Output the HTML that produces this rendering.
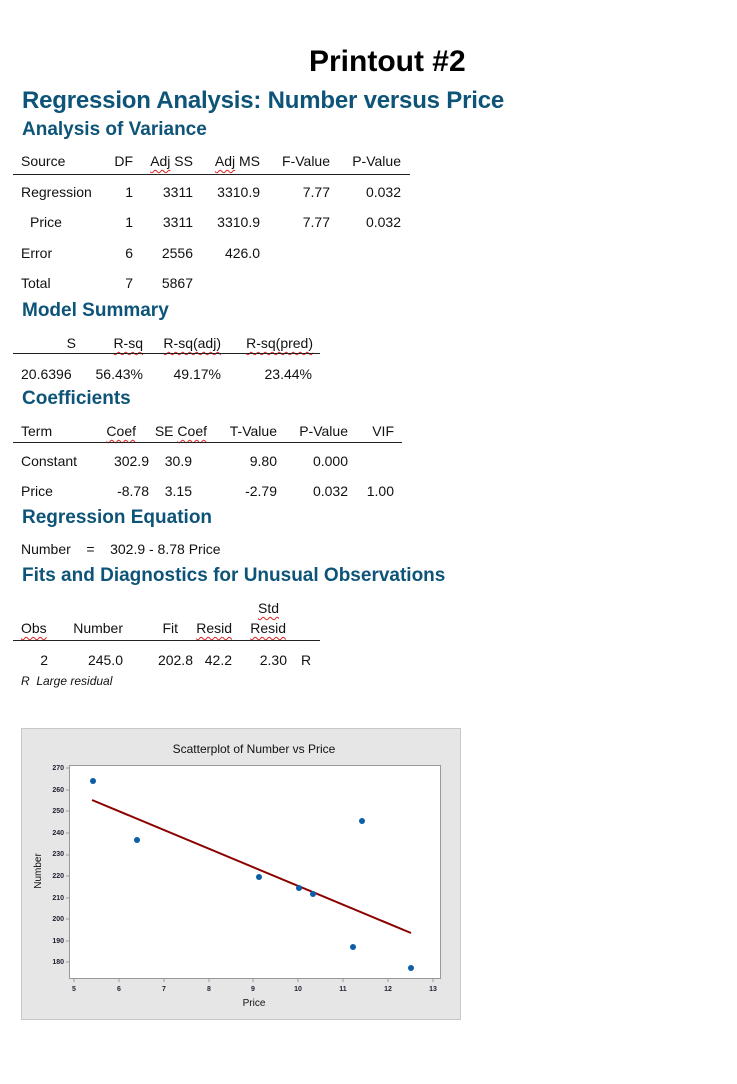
<!DOCTYPE html>
<html><head><meta charset="utf-8"><style>
body{margin:0;width:737px;height:1084px;background:#fff;position:relative;font-family:"Liberation Sans",sans-serif;overflow:hidden}
.t{position:absolute;font-size:14px;line-height:18px;color:#111;white-space:pre}
.h{position:absolute;color:#0d5478;font-weight:bold;white-space:pre;font-size:19px;line-height:22px}
.ln{position:absolute;height:1px;background:#222}
.w{text-decoration:underline wavy #d22;text-decoration-thickness:1px;text-underline-offset:3px}
</style></head><body>
<div style="position:absolute;left:309px;top:44px;font-size:30px;font-weight:bold;line-height:36px">Printout #2</div>
<div class="h" style="left:22px;top:87px;font-size:24px;line-height:28px;letter-spacing:-0.2px">Regression Analysis: Number versus Price</div>
<div class="h" style="left:22px;top:119px">Analysis of Variance</div>

<div class="t" style="left:21px;top:152px">Source</div>
<div class="t" style="right:604px;top:152px">DF</div>
<div class="t" style="right:544px;top:152px"><span class="w">Adj</span> SS</div>
<div class="t" style="right:477px;top:152px"><span class="w">Adj</span> MS</div>
<div class="t" style="right:407px;top:152px">F-Value</div>
<div class="t" style="right:336px;top:152px">P-Value</div>
<div class="ln" style="left:13px;width:397px;top:174px"></div>
<div class="t" style="left:21px;top:183px">Regression</div>
<div class="t" style="right:604px;top:183px">1</div><div class="t" style="right:544px;top:183px">3311</div><div class="t" style="right:477px;top:183px">3310.9</div><div class="t" style="right:407px;top:183px">7.77</div><div class="t" style="right:336px;top:183px">0.032</div>
<div class="t" style="left:30px;top:213px">Price</div>
<div class="t" style="right:604px;top:213px">1</div><div class="t" style="right:544px;top:213px">3311</div><div class="t" style="right:477px;top:213px">3310.9</div><div class="t" style="right:407px;top:213px">7.77</div><div class="t" style="right:336px;top:213px">0.032</div>
<div class="t" style="left:21px;top:244px">Error</div>
<div class="t" style="right:604px;top:244px">6</div><div class="t" style="right:544px;top:244px">2556</div><div class="t" style="right:477px;top:244px">426.0</div>
<div class="t" style="left:21px;top:274px">Total</div>
<div class="t" style="right:604px;top:274px">7</div><div class="t" style="right:544px;top:274px">5867</div>

<div class="h" style="left:22px;top:300px">Model Summary</div>
<div class="t" style="right:661px;top:334px">S</div>
<div class="t" style="right:594px;top:334px"><span class="w">R-sq</span></div>
<div class="t" style="right:516px;top:334px"><span class="w">R-sq(adj)</span></div>
<div class="t" style="right:424px;top:334px"><span class="w">R-sq(pred)</span></div>
<div class="ln" style="left:13px;width:307px;top:353px"></div>
<div class="t" style="left:21px;top:365px">20.6396</div>
<div class="t" style="right:594px;top:365px">56.43%</div>
<div class="t" style="right:516px;top:365px">49.17%</div>
<div class="t" style="right:425px;top:365px">23.44%</div>

<div class="h" style="left:22px;top:388px">Coefficients</div>
<div class="t" style="left:21px;top:422px">Term</div>
<div class="t" style="right:601px;top:422px"><span class="w">Coef</span></div>
<div class="t" style="right:530px;top:422px">SE <span class="w">Coef</span></div>
<div class="t" style="right:460px;top:422px">T-Value</div>
<div class="t" style="right:389px;top:422px">P-Value</div>
<div class="t" style="right:343px;top:422px">VIF</div>
<div class="ln" style="left:13px;width:389px;top:442px"></div>
<div class="t" style="left:21px;top:452px">Constant</div>
<div class="t" style="right:588px;top:452px">302.9</div><div class="t" style="right:545px;top:452px">30.9</div><div class="t" style="right:460px;top:452px">9.80</div><div class="t" style="right:389px;top:452px">0.000</div>
<div class="t" style="left:21px;top:482px">Price</div>
<div class="t" style="right:588px;top:482px">-8.78</div><div class="t" style="right:545px;top:482px">3.15</div><div class="t" style="right:460px;top:482px">-2.79</div><div class="t" style="right:389px;top:482px">0.032</div><div class="t" style="right:343px;top:482px">1.00</div>

<div class="h" style="left:22px;top:507px">Regression Equation</div>
<div class="t" style="left:21px;top:540px">Number    =    302.9 - 8.78 Price</div>

<div class="h" style="left:22px;top:565px">Fits and Diagnostics for Unusual Observations</div>
<div class="t" style="left:258px;top:599px"><span class="w">Std</span></div>
<div class="t" style="left:21px;top:619px"><span class="w">Obs</span></div>
<div class="t" style="right:614px;top:619px">Number</div>
<div class="t" style="right:559px;top:619px">Fit</div>
<div class="t" style="right:505px;top:619px"><span class="w">Resid</span></div>
<div class="t" style="right:451px;top:619px"><span class="w">Resid</span></div>
<div class="ln" style="left:13px;width:307px;top:640px"></div>
<div class="t" style="right:689px;top:651px">2</div>
<div class="t" style="right:614px;top:651px">245.0</div>
<div class="t" style="right:544px;top:651px">202.8</div>
<div class="t" style="right:505px;top:651px">42.2</div>
<div class="t" style="right:450px;top:651px">2.30</div>
<div class="t" style="left:301px;top:651px">R</div>
<div class="t" style="left:21px;top:672px;font-size:12px;font-style:italic">R  Large residual</div>

<svg style="position:absolute;left:21px;top:728px" width="440" height="293" viewBox="21 728 440 293" font-family="Liberation Sans, sans-serif">
<rect x="21.5" y="728.5" width="439" height="291" fill="#e6e6e6" stroke="#c8c8c8"/>
<rect x="69.5" y="765.5" width="371" height="213" fill="#fff" stroke="#999"/>
<text x="254" y="753" font-size="12" text-anchor="middle" fill="#111">Scatterplot of Number vs Price</text>
<g font-size="7" fill="#223" text-anchor="end" font-weight="bold">
<text x="64" y="770">270</text><text x="64" y="792">260</text><text x="64" y="813">250</text><text x="64" y="835">240</text><text x="64" y="856">230</text><text x="64" y="878">220</text><text x="64" y="900">210</text><text x="64" y="921">200</text><text x="64" y="943">190</text><text x="64" y="964">180</text>
</g>
<g stroke="#999" stroke-width="1">
<line x1="66" x2="69" y1="768" y2="768"/><line x1="66" x2="69" y1="790" y2="790"/><line x1="66" x2="69" y1="811" y2="811"/><line x1="66" x2="69" y1="833" y2="833"/><line x1="66" x2="69" y1="855" y2="855"/><line x1="66" x2="69" y1="876" y2="876"/><line x1="66" x2="69" y1="898" y2="898"/><line x1="66" x2="69" y1="919" y2="919"/><line x1="66" x2="69" y1="941" y2="941"/><line x1="66" x2="69" y1="962" y2="962"/>
<line x1="74" x2="74" y1="979" y2="982"/><line x1="119" x2="119" y1="979" y2="982"/><line x1="164" x2="164" y1="979" y2="982"/><line x1="209" x2="209" y1="979" y2="982"/><line x1="253" x2="253" y1="979" y2="982"/><line x1="298" x2="298" y1="979" y2="982"/><line x1="343" x2="343" y1="979" y2="982"/><line x1="388" x2="388" y1="979" y2="982"/><line x1="433" x2="433" y1="979" y2="982"/>
</g>
<g font-size="7" fill="#223" text-anchor="middle" font-weight="bold">
<text x="74" y="991">5</text><text x="119" y="991">6</text><text x="164" y="991">7</text><text x="209" y="991">8</text><text x="253" y="991">9</text><text x="298" y="991">10</text><text x="343" y="991">11</text><text x="388" y="991">12</text><text x="433" y="991">13</text>
</g>
<text x="254" y="1006" font-size="10" text-anchor="middle" fill="#111">Price</text>
<text transform="translate(41,871) rotate(-90)" font-size="10" text-anchor="middle" fill="#111">Number</text>
<line x1="92" y1="800" x2="411" y2="933" stroke="#8b0000" stroke-width="2"/>
<g fill="#0b5ea8">
<circle cx="93" cy="781" r="3"/><circle cx="137" cy="840" r="3"/><circle cx="259" cy="877" r="3"/><circle cx="299" cy="888" r="3"/><circle cx="313" cy="894" r="3"/><circle cx="353" cy="947" r="3"/><circle cx="362" cy="821" r="3"/><circle cx="411" cy="968" r="3"/>
</g>
</svg>
</body></html>
